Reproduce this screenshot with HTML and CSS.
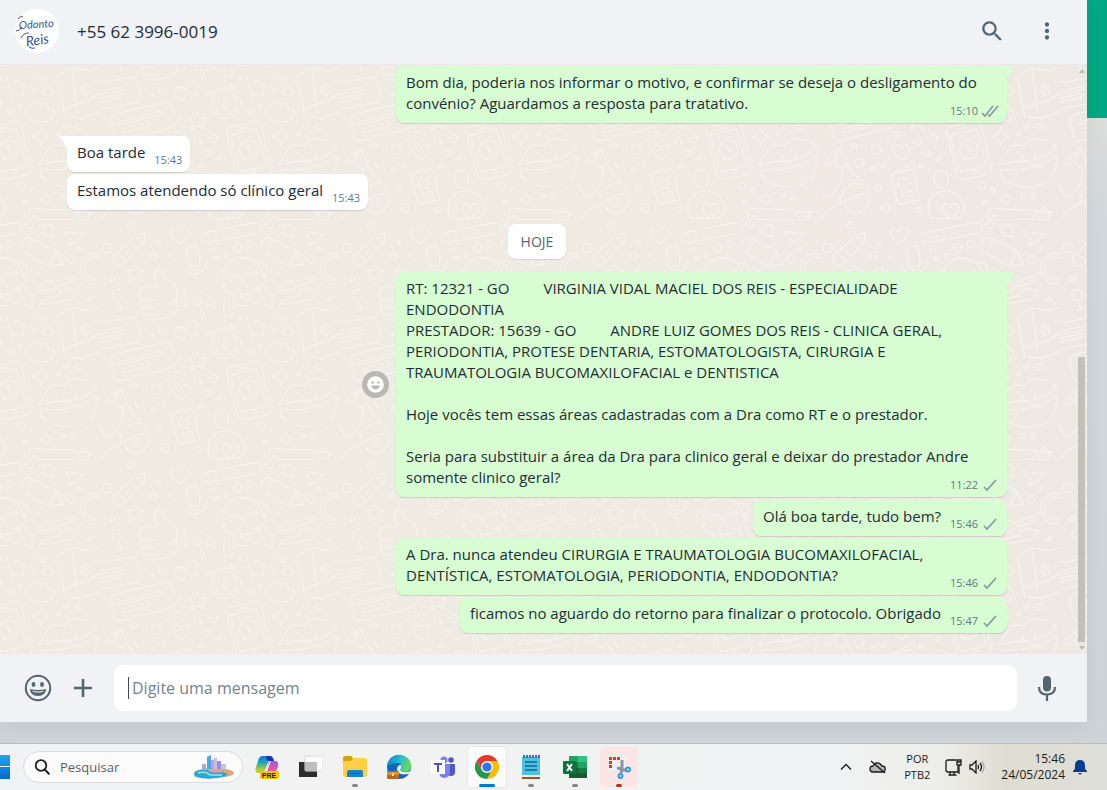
FILE: index.html
```html
<!DOCTYPE html>
<html lang="pt-BR">
<head>
    <meta charset="UTF-8">
    <meta name="viewport" content="width=device-width, initial-scale=1.0">
    <title>Conversa</title>
    <link rel="stylesheet" href="styles.css">
</head>
<body>

    <div class="desktop">
        <div class="app">

            <!-- Header -->
            <header class="chat-header">
                <svg class="avatar" viewBox="0 0 44 44" role="img" aria-label="Odonto Reis">
                    <circle cx="22" cy="22" r="22" fill="#fff"/>
                    <text x="4" y="19" transform="rotate(-4 22 18)">Odonto</text>
                    <text x="11" y="36" class="avatar-reis" transform="rotate(-8 22 34)">Reis</text>
                    <path d="M3 10q3-4 5-2M1 22q4 0 6-4M6 29q2-5 8-5M14 38q3 2 6 1"/>
                </svg>
                <h1>+55 62 3996-0019</h1>
                <button type="button" class="icon-btn search-btn" aria-label="Pesquisar na conversa">
                    <svg width="26" height="26" viewBox="0 0 24 24"><path fill="currentColor" d="M15.9 14.3H15l-.3-.3c1-1.1 1.6-2.7 1.6-4.3 0-3.7-3-6.7-6.7-6.7S3 6 3 9.7s3 6.7 6.7 6.7c1.6 0 3.2-.6 4.3-1.6l.3.3v.8l5.1 5.1 1.5-1.5-5-5.2zm-6.2 0c-2.6 0-4.6-2.1-4.6-4.6s2.1-4.6 4.6-4.6 4.6 2.1 4.6 4.6-2 4.6-4.6 4.6z"/></svg>
                </button>
                <button type="button" class="icon-btn" aria-label="Menu">
                    <svg width="26" height="26" viewBox="0 0 24 24"><path fill="currentColor" d="M12 8a2 2 0 1 0 0-4 2 2 0 0 0 0 4zm0 2a2 2 0 1 0 0 4 2 2 0 0 0 0-4zm0 6a2 2 0 1 0 0 4 2 2 0 0 0 0-4z"/></svg>
                </button>
            </header>

            <!-- Conversation -->
            <main class="chat">
                <svg class="wallpaper" aria-hidden="true">
                    <defs>
                        <path id="star" d="M0-26 8-8 27-8 13 5 19 25 0 14-18 26-13 6-28-7-8-9Z"/>
                        <path id="spark" d="M0-27Q4-5 25 0 5 4 0 26-4 5-24 0-4-4 0-27Z"/>
                        <path id="heart" d="M0 24C-34 2-28-20-12-20-3-20 0-12 0-10 2-18 8-24 17-21 34-14 24 10 0 24Z"/>
                        <pattern id="doodles" width="720" height="720" patternUnits="userSpaceOnUse" patternTransform="translate(100 155) scale(.3333)">
                            <g fill="none" stroke="#f5f2ec" stroke-width="4" stroke-linecap="round" stroke-linejoin="round">
                                <!-- pencils -->
                                <path d="M38 110 108 46 136 40 132 68 68 136Q52 142 44 130T38 110ZM108 46 130 68M50 98 80 124M484 76Q490 50 510 54L590 92 610 132 570 140 494 98Q480 90 484 76ZM516 58 502 98M590 92 570 140"/>
                                <!-- ruler, quotes -->
                                <path d="M318 38 464 8Q484 6 486 22T474 40L330 66Q308 68 306 52T318 38ZM326 52h2M346 48h2M370 44h2M394 40h2"/>
                                <path d="M226 345a17 17 0 1 1 30 2Q254 360 248 364L240 354Q226 356 226 345ZM262 328a17 17 0 1 1 30 2Q290 344 284 348L276 338Q264 338 262 328ZM548 38a17 17 0 1 1 30 0Q582 48 580 52L566 48Q550 50 548 38Z"/>
                                <!-- microphone -->
                                <path d="M260 96Q264 78 280 78T298 100L300 132Q296 150 282 150T264 132ZM242 136Q254 164 286 162 320 156 320 122M286 164 296 200"/>
                                <!-- thumb up -->
                                <path d="M124 214Q120 206 132 202L170 200Q162 180 166 152 174 136 186 146 194 174 226 196L230 206Q242 200 254 208 262 230 256 264 244 276 234 268 210 298 146 302 136 298 142 290 124 286 126 272 120 268 124 262 116 250 124 240 116 226 124 214ZM230 206Q226 240 234 268M124 240h40M124 262h42M130 284h38M200 252Q220 252 232 240"/>
                                <!-- monkey -->
                                <path d="M370 170Q374 118 424 114 478 114 490 168M370 150Q340 160 356 190 362 200 374 196M470 128Q510 126 500 160 498 170 488 174M370 180Q362 210 390 220 430 222 426 170 400 156 370 180ZM432 172Q430 210 470 208 504 190 490 164 460 146 432 172ZM384 170 396 184M402 162 406 182M440 160 452 176M462 150 470 174M420 220Q436 230 456 218 456 236 440 238T420 220ZM376 232Q366 266 376 286 394 294 402 268 408 240 396 224M478 206Q480 240 508 262 526 256 518 236 508 212 494 196M402 250Q440 268 484 238"/>
                                <!-- arrows -->
                                <path d="M284 248 320 222 346 264 334 268 322 248 310 292 300 288 308 244 290 258ZM610 34 672 42 630 78 630 56Z"/>
                                <!-- sliders -->
                                <path d="M534 200 552 194Q556 178 576 182 582 194 594 184L640 170Q652 176 642 184L600 198Q582 198 580 210 562 222 554 208L536 214Q526 208 534 200ZM546 240 594 228Q608 200 630 206 636 216 656 210 664 218 650 222 640 240 620 240L552 254Q536 250 546 240Z"/>
                                <!-- speech cards -->
                                <path d="M0 308 94 292Q108 290 110 304L122 350Q124 362 110 366L0 388M0 334 68 320Q78 324 66 330L0 344M0 354 64 342Q72 350 60 354L0 366M44 404 200 366Q214 364 216 380L222 402 242 414 228 430Q222 440 208 444L56 484Q50 486 46 476L30 428Q26 410 44 404ZM60 426 186 392Q198 396 184 404L62 434Q52 432 60 426ZM72 446 146 428Q160 434 144 440L76 458Q62 456 72 446Z"/>
                                <!-- stopwatch -->
                                <circle cx="376" cy="370" r="46"/><circle cx="376" cy="370" r="35"/>
                                <path d="M372 350V376L362 388Q378 392 382 376T372 350ZM388 318Q396 306 408 320L404 328ZM320 344Q316 332 330 334L338 338Z"/>
                                <!-- phone -->
                                <path d="M392 440 464 424Q480 422 484 438L514 566Q518 580 502 584L430 598Q416 600 412 586L380 460Q376 444 392 440ZM390 466 470 446 500 556 422 576ZM420 446 438 442"/>
                                <circle cx="446" cy="508" r="28"/><path d="M430 530 426 542 442 534M444 494Q440 516 458 514"/><circle cx="464" cy="574" r="6"/>
                                <!-- lips -->
                                <path d="M536 554Q566 500 586 496 606 494 614 500 630 470 660 478 690 480 710 500 690 530 640 540 580 544 536 554ZM542 580Q546 600 580 612 640 636 690 600 712 570 712 528 690 544 650 560 600 572 542 570ZM596 540Q620 556 650 530M610 572Q620 540 670 564M604 524 612 538M646 514 644 534"/>
                                <!-- map -->
                                <path d="M592 286 636 264 690 272 720 262M592 286 614 410 660 414 720 398M614 386 690 360 720 336M636 264 654 400"/><circle cx="676" cy="328" r="6"/><path d="M664 328a13 13 0 1 1 26-2Q688 340 678 350 664 340 664 328Z"/>
                                <!-- cloud -->
                                <path d="M500 410Q486 382 514 378 524 356 546 370 570 370 564 384 588 392 582 412 560 430 526 426 506 424 500 410Z"/>
                                <!-- scooter -->
                                <path d="M12 550 60 504 66 510 26 556ZM50 520Q40 546 56 560 76 570 80 552 80 530 64 518M68 566Q70 620 26 652 4 640 0 612M84 556 122 606M60 670Q66 610 116 610 152 614 148 644 120 640 98 650 66 668 60 670 20 690 0 720M74 668Q80 700 112 700 150 690 146 646"/><circle cx="108" cy="664" r="14"/>
                                <!-- passport -->
                                <path d="M212 584 262 560 270 570M212 584 268 570Q282 568 284 580L298 660 234 674ZM246 640 276 632 280 644 248 652Z"/><circle cx="250" cy="610" r="16"/>
                                <!-- bear -->
                                <path d="M342 600Q340 572 360 572 384 572 386 600 382 624 364 624 346 620 342 600ZM326 700Q318 640 376 632 432 638 434 690 426 720 396 716H350Q330 716 326 700ZM506 700Q504 684 520 686L640 690 690 700 680 720H506ZM512 718 524 704 532 718"/>
                                <circle cx="708" cy="146" r="46"/><circle cx="708" cy="146" r="34"/><circle cx="52" cy="226" r="16"/><path d="M56 242 62 266M52 270 74 266"/>
                                <use href="#star" x="106" y="160"/><use href="#star" x="472" y="324"/><use href="#star" x="292" y="422"/><use href="#star" x="672" y="704"/>
                                <use href="#spark" x="542" y="470"/>
                                <use href="#heart" x="238" y="46"/><use href="#heart" x="244" y="516"/><use href="#heart" x="392" y="692"/>
                                <g>
                                    <circle cx="22" cy="84" r="15"/><circle cx="160" cy="108" r="12"/><circle cx="209" cy="107" r="5"/><circle cx="176" cy="69" r="5"/><circle cx="92" cy="15" r="9"/><circle cx="508" cy="14" r="12"/><circle cx="452" cy="72" r="10"/><circle cx="414" cy="82" r="12"/><circle cx="338" cy="90" r="7"/><circle cx="350" cy="116" r="6"/><circle cx="378" cy="106" r="6"/><circle cx="634" cy="118" r="11"/><circle cx="660" cy="88" r="6"/><circle cx="534" cy="158" r="5"/><circle cx="38" cy="176" r="8"/><circle cx="184" cy="330" r="9"/><circle cx="154" cy="343" r="5"/><circle cx="432" cy="294" r="11"/><circle cx="526" cy="286" r="6"/><circle cx="550" cy="298" r="8"/><circle cx="564" cy="332" r="14"/><circle cx="522" cy="334" r="6"/><circle cx="452" cy="394" r="9"/><circle cx="480" cy="378" r="5"/><circle cx="230" cy="462" r="8"/><circle cx="294" cy="485" r="9"/><circle cx="340" cy="476" r="11"/><circle cx="170" cy="508" r="15"/><circle cx="206" cy="483" r="5"/><circle cx="104" cy="497" r="7"/><circle cx="118" cy="548" r="12"/><circle cx="158" cy="567" r="6"/><circle cx="190" cy="557" r="5"/><circle cx="322" cy="520" r="9"/><circle cx="356" cy="536" r="6"/><circle cx="304" cy="558" r="6"/><circle cx="176" cy="623" r="9"/><circle cx="196" cy="684" r="12"/><circle cx="618" cy="442" r="7"/><circle cx="658" cy="442" r="10"/><circle cx="596" cy="460" r="6"/><circle cx="486" cy="618" r="11"/><circle cx="518" cy="630" r="7"/><circle cx="558" cy="658" r="13"/><circle cx="494" cy="668" r="7"/><circle cx="610" cy="647" r="6"/><circle cx="637" cy="650" r="8"/><circle cx="688" cy="238" r="6"/><circle cx="298" cy="690" r="8"/>
                                </g>
                            </g>
                        </pattern>
                    </defs>
                    <rect width="100%" height="100%" fill="url(#doodles)"/>
                </svg>

                <article class="msg out wide tail">
                    <p>Bom dia, poderia nos informar o motivo, e confirmar se deseja o desligamento do<br>convénio? Aguardamos a resposta para tratativo.</p>
                    <div class="meta">
                        <time>15:10</time>
                        <svg width="18" height="13" viewBox="0 0 18 13"><path d="M1 8l3 3L12 1M7 10l1.500 1L17 1"/></svg>
                    </div>
                </article>
                <article class="msg in tail first-in">
                    <p>Boa tarde</p>
                    <div class="meta"><time>15:43</time></div>
                </article>
                <article class="msg in">
                    <p>Estamos atendendo só clínico geral</p>
                    <div class="meta"><time>15:43</time></div>
                </article>

                <div class="day">HOJE</div>

                <div class="row">
                    <button type="button" class="react" aria-label="Reagir">
                        <svg width="17" height="17" viewBox="0 0 17 17"><circle cx="8.500" cy="8.500" r="8.300" fill="#fff"/><circle cx="5.600" cy="6.500" r="1.200"/><circle cx="11.400" cy="6.500" r="1.200"/><path d="M4 9.500h9q-1 3.700-4.500 3.700T4 9.500z"/></svg>
                    </button>
                    <article class="msg out tail">
                        <p>RT: 12321 - GO<span class="tab"></span>VIRGINIA VIDAL MACIEL DOS REIS - ESPECIALIDADE<br>ENDODONTIA<br>PRESTADOR: 15639 - GO<span class="tab"></span>ANDRE LUIZ GOMES DOS REIS - CLINICA GERAL,<br>PERIODONTIA, PROTESE DENTARIA, ESTOMATOLOGISTA, CIRURGIA E<br>TRAUMATOLOGIA BUCOMAXILOFACIAL e DENTISTICA<br><br>Hoje vocês tem essas áreas cadastradas com a Dra como RT e o prestador.<br><br>Seria para substituir a área da Dra para clinico geral e deixar do prestador Andre<br>somente clinico geral?</p>
                        <div class="meta">
                            <time>11:22</time>
                            <svg width="18" height="13" viewBox="0 0 18 13"><path d="M3 8l3 3L15 1"/></svg>
                        </div>
                    </article>
                </div>
                <article class="msg out short">
                    <p>Olá boa tarde, tudo bem?</p>
                    <div class="meta">
                        <time>15:46</time>
                        <svg width="18" height="13" viewBox="0 0 18 13"><path d="M3 8l3 3L15 1"/></svg>
                    </div>
                </article>
                <article class="msg out wide">
                    <p>A Dra. nunca atendeu CIRURGIA E TRAUMATOLOGIA BUCOMAXILOFACIAL,<br>DENTÍSTICA, ESTOMATOLOGIA, PERIODONTIA, ENDODONTIA?</p>
                    <div class="meta">
                        <time>15:46</time>
                        <svg width="18" height="13" viewBox="0 0 18 13"><path d="M3 8l3 3L15 1"/></svg>
                    </div>
                </article>
                <article class="msg out short">
                    <p>ficamos no aguardo do retorno para finalizar o protocolo. Obrigado</p>
                    <div class="meta">
                        <time>15:47</time>
                        <svg width="18" height="13" viewBox="0 0 18 13"><path d="M3 8l3 3L15 1"/></svg>
                    </div>
                </article>

                <div class="scrollbar" aria-hidden="true">
                    <i class="up"></i>
                    <i class="thumb"></i>
                    <i class="down"></i>
                </div>
            </main>

            <!-- Message box -->
            <footer class="composer">
                <button type="button" class="icon-btn" aria-label="Emoji">
                    <svg width="28" height="28" viewBox="0 0 28 28"><circle cx="14" cy="14" r="12.200" fill="none" stroke="currentColor" stroke-width="2"/><ellipse cx="9.500" cy="10.500" rx="1.900" ry="2.400" fill="currentColor"/><ellipse cx="18" cy="10.500" rx="1.900" ry="2.400" fill="currentColor"/><path d="M6 15q8 2 16 0c0 4-3 7-8 7s-8-3-8-7z" fill="currentColor"/><path d="M8 16.800q6 1.600 12 0-1 1.800-6 1.800t-6-1.800z" fill="#f0f2f5"/></svg>
                </button>
                <button type="button" class="icon-btn plus-btn" aria-label="Anexar">
                    <svg width="20" height="20" viewBox="0 0 20 20"><path d="M10 1v18M1 10h18" stroke="currentColor" stroke-width="2.600"/></svg>
                </button>
                <div class="field">
                    <span class="caret"></span>
                    <input type="text" placeholder="Digite uma mensagem" aria-label="Digite uma mensagem">
                </div>
                <button type="button" class="icon-btn mic-btn" aria-label="Gravar áudio">
                    <svg width="20" height="26" viewBox="0 0 20 26"><rect x="6" y="1" width="8" height="15.500" rx="4" fill="currentColor"/><path d="M2 12q0 7.500 8 7.500t8-7.500M10 19v7" fill="none" stroke="currentColor" stroke-width="2.200"/></svg>
                </button>
            </footer>
        </div>
    </div>

    <!-- Taskbar -->
    <nav class="taskbar">
        <button type="button" class="start" aria-label="Iniciar">
            <svg width="10" height="24" viewBox="0 0 10 24"><defs><linearGradient id="win" x2="0" y2="1"><stop stop-color="#24a5ee"/><stop offset="1" stop-color="#0069d0"/></linearGradient></defs><path d="M0 0h10v11H0zM0 12h10v12H0z" fill="url(#win)"/></svg>
        </button>
        <div class="task-search">
            <svg width="16" height="16" viewBox="0 0 16 16"><circle cx="7" cy="6.500" r="5.300" fill="none" stroke="#222" stroke-width="1.800"/><path d="M10.800 10.500l4 4.200" stroke="#222" stroke-width="2" stroke-linecap="round"/></svg>
            <input type="search" placeholder="Pesquisar" aria-label="Pesquisar">
            <svg width="40" height="24" viewBox="0 0 40 24">
                <ellipse cx="20" cy="18" rx="20" ry="5" fill="#e0a878"/>
                <path d="M0 19q2-5 14-4 4 4 14 2 8 1 4 4-16 5-30 1-2-1-2-3z" fill="#2ba9d6"/><path d="M4 18q8-2 12 2h12" stroke="#91e4f3" stroke-width="1.500" fill="none"/>
                <path d="M13 2l4-2v14h-4z" fill="#4aa9ea"/><path d="M17 5h3v9h-3zM8 9h4v5H8z" fill="#b5a5dc"/><path d="M20 3h3v11h-3zM27 9h5v5h-5z" fill="#c9bce8"/><path d="M23 6h4v8h-4z" fill="#9a94ce"/>
            </svg>
        </div>
        <ul class="apps">
            <li><button type="button" aria-label="Copilot">
                <svg width="24" height="24" viewBox="0 0 24 24"><defs><linearGradient id="cop" x2="0" y2="1"><stop stop-color="#1376db"/><stop offset=".4" stop-color="#20a7b5"/><stop offset=".8" stop-color="#b9cb2b"/></linearGradient><linearGradient id="cop2" x2="0" y2="1"><stop stop-color="#9a58e5"/><stop offset=".6" stop-color="#f0579b"/><stop offset="1" stop-color="#ff9a52"/></linearGradient></defs><path d="M8 1h8l-3 6-4 11H3q-4-1-2-6l2-6q1-5 5-5z" fill="url(#cop)"/><path d="M11 1h4q3 0 4 5h-6q-2-2-2-5z" fill="#1336b7"/><path d="M15 6h5q4 0 3 5l-2 6q-1 4-5 4H8q3-1 4-6l1-6q0-2 2-3z" fill="url(#cop2)"/><path d="M14 8q1-2 2-2l-4 10H9q2 0 3-3z" fill="#fff"/><rect x="5" y="16" width="19" height="8" rx="2" fill="#ffc400"/><text x="14" y="23" text-anchor="middle" class="pre">PRE</text></svg>
            </button></li>
            <li><button type="button" aria-label="Visão de tarefas">
                <svg width="24" height="24" viewBox="0 0 24 24"><rect y="7" width="18" height="15" fill="#2b2b2a"/><rect x="6" y="1" width="18" height="15" rx="1" fill="#fafafa" stroke="#dcdcdc"/><path d="M6 7h12v9H6z" fill="#bdbdbd"/></svg>
            </button></li>
            <li class="open"><button type="button" aria-label="Explorador de Arquivos">
                <svg width="24" height="24" viewBox="0 0 24 24"><path d="M0 3q0-2 2-2h6l2 2v5H0z" fill="#d99e12"/><path d="M10 3h12q2 0 2 2v15q0 2-2 2H2q-2 0-2-2V6h8z" fill="#ffd047"/><path d="M4 22v-5q0-2 2-2h12q2 0 2 2v5z" fill="#1483cf"/><path d="M7 18h10v1H7z" fill="#0a61a5"/></svg>
            </button></li>
            <li><button type="button" aria-label="Edge">
                <svg width="24" height="24" viewBox="0 0 24 24"><defs><linearGradient id="edge" x2="1" y2=".3"><stop stop-color="#087fcc"/><stop offset=".6" stop-color="#27bfd0"/><stop offset="1" stop-color="#65dc58"/></linearGradient></defs><circle cx="12" cy="12" r="12" fill="#0f68b9"/><path d="M0 11Q2 0 12 0q12 1 12 11 0 6-7 6-4 0-3-3 2-6-4-6-7 0-10 3z" fill="url(#edge)"/><path d="M10 13q0 8 11 6 2 0 2-3-3 2-7 1-4-1-2-4 1-3-1-3t-3 3z" fill="#f2f5f7"/><rect y="16" width="12" height="8" rx="1" fill="#bd671c"/><path d="M0 17h12v3H0z" fill="#dd922e"/><path d="M5 18h2v3H5z" fill="#ffe171"/></svg>
            </button></li>
            <li><button type="button" aria-label="Teams">
                <svg width="24" height="24" viewBox="0 0 24 24"><circle cx="13" cy="5" r="3.500" fill="#7b83eb"/><circle cx="20" cy="5" r="2.800" fill="#5059c9"/><path d="M16 9h8v8q0 4-4 4t-4-3z" fill="#5059c9"/><path d="M8 9h11v7q0 7-6 7-5 0-5-7z" fill="#7b83eb"/><path d="M0 5h14v14H0z" fill="#fff"/><path d="M3 8h8v2H8v7H6v-7H3z" fill="#4b53bc"/></svg>
            </button></li>
            <li class="active"><button type="button" aria-label="Chrome">
                <svg width="24" height="24" viewBox="0 0 24 24"><path d="M12 6h10.400A12 12 0 0 1 12 24l5.200-9z" fill="#fbbc04"/><path d="M1.600 6L6.800 15l10.400 0L12 24A12 12 0 0 1 1.600 6z" fill="#279847"/><path d="M12 6h10.400A12 12 0 0 0 1.600 6l5.200 9z" fill="#e33b2e"/><circle cx="12" cy="12" r="6" fill="#fff"/><circle cx="12" cy="12" r="4.600" fill="#2f76ed"/></svg>
            </button></li>
            <li class="open"><button type="button" aria-label="Bloco de Notas">
                <svg width="24" height="24" viewBox="0 0 24 24"><path d="M3 20h18v4H3z" fill="#a65316"/><path d="M3 20h18v2H3z" fill="#eee"/><path d="M3 2h18v18H3z" fill="#4fc1e4"/><path d="M5 0v3M8 0v3M11 0v3M14 0v3M17 0v3M20 0v3M6 7h12M6 11h12M6 15h12" stroke="#096a92" stroke-width="1.700"/></svg>
            </button></li>
            <li class="open"><button type="button" aria-label="Excel">
                <svg width="24" height="24" viewBox="0 0 24 24"><path d="M6 1h9v6H6z" fill="#21a366"/><path d="M15 1h9v6h-9z" fill="#33c481"/><path d="M6 7h9v6H6z" fill="#107c41"/><path d="M15 7h9v6h-9z" fill="#21a366"/><path d="M6 13h18v10H6z" fill="#185c37"/><path d="M15 13h9v5h-9z" fill="#107c41"/><rect y="6" width="13" height="13" rx="1" fill="#0d7440"/><path d="M4 9l5 7M9 9l-5 7" stroke="#fff" stroke-width="2"/></svg>
            </button></li>
            <li class="alert"><button type="button" aria-label="Ferramenta de Captura">
                <svg width="24" height="24" viewBox="0 0 24 24"><rect x="1" y="1" width="18" height="15" rx="2" fill="#edf1f4"/><path d="M3.500 13V3.500H13" fill="none" stroke="#d2400f" stroke-width="3" stroke-dasharray="3 1"/><path d="M15 5v9l-1 4M14 15h6M15 14l-5-1" fill="none" stroke="#8b969c" stroke-width="3"/><circle cx="21" cy="14.500" r="2" fill="none" stroke="#28a0dd" stroke-width="2"/><circle cx="13.500" cy="21" r="2" fill="none" stroke="#28a0dd" stroke-width="2"/></svg>
            </button></li>
        </ul>
        <div class="tray">
            <button type="button" aria-label="Mostrar ícones ocultos"><svg width="12" height="8" viewBox="0 0 12 8"><path d="M1 6.500l5-5 5 5"/></svg></button>
            <button type="button" class="cloud" aria-label="OneDrive"><svg width="18" height="14" viewBox="0 0 18 14"><path d="M4 12h10q3-1 2-4 0-2-3-2-2-4-6-3-2 1-3 3-3 0-3 3t3 3z"/><path d="M2 1l14 12"/></svg></button>
            <button type="button" class="lang">POR<br>PTB2</button>
            <button type="button" class="net" aria-label="Rede e som">
                <svg width="17" height="17" viewBox="0 0 17 17"><path d="M11 1H3Q1 1 1 3v8q0 2 2 2h10V7M5 13v3M9 13v3M3.500 16h8"/><path d="M12 1h4v5h-4zM14 6v9M12 3h4"/></svg>
                <svg width="17" height="14" viewBox="0 0 17 14"><path d="M1 5h2l4-4v12L3 9H1zM9 5q1 2 0 4M11 3q3 4 0 8"/><path class="faint" d="M13 1.500q4 5.500 0 11"/></svg>
            </button>
            <button type="button" class="clock">15:46<br>24/05/2024</button>
            <button type="button" aria-label="Notificações"><svg class="bell" width="14" height="16" viewBox="0 0 14 16"><path d="M7 1q5 0 5 6v3l2 2v1H0v-1l2-2V7q0-6 5-6zM5 14h4q-2 3-4 0z"/></svg></button>
        </div>
    </nav>

</body>
</html>
```
FILE: styles.css
```css
* {
    box-sizing: border-box;
}

body {
    margin: 0;
    height: 100vh;
    display: flex;
    flex-direction: column;
    overflow: hidden;
    font-family: "Segoe UI", "Open Sans", "Noto Sans", sans-serif;
    color: #222d33;
}

button {
    border: 0;
    padding: 0;
    background: none;
    font: inherit;
    color: inherit;
    display: flex;
    align-items: center;
    justify-content: center;
    cursor: pointer;
}

svg {
    display: block;
    flex: none;
}

/* Window */
.desktop {
    flex: 1;
    min-height: 0;
    display: flex;
    padding: 0 20px 21px 0;
    background: linear-gradient(#00a884 118px, #dcdddb 118px, #d1d7db 220px, #cdd3d6);
}

.app {
    flex: 1;
    min-width: 0;
    display: flex;
    flex-direction: column;
    box-shadow: 0 6px 18px rgba(11, 20, 26, 0.05);
}

/* Header */
.chat-header {
    height: 65px;
    display: flex;
    align-items: center;
    padding: 0 27px 2px 15px;
    background: #f0f2f5;
    border-bottom: 1px solid #e9e9ea;
}

.chat-header h1 {
    flex: 1;
    margin: 0 0 0 18px;
    font-size: 17px;
    font-weight: 400;
}

.avatar {
    width: 44px;
    height: 44px;
}

.avatar text {
    font: italic 11px Lato, sans-serif;
    fill: #39578d;
}

.avatar .avatar-reis {
    font-size: 14px;
}

.avatar path {
    fill: none;
    stroke: #39578d;
    stroke-width: 1;
}

.icon-btn {
    color: #54656f;
}

.search-btn {
    margin-right: 29px;
}

/* Conversation */
.chat {
    position: relative;
    flex: 1;
    min-height: 0;
    display: flex;
    flex-direction: column;
    justify-content: flex-end;
    gap: 2px;
    padding: 0 80px 21px 67px;
    overflow: hidden;
    background: linear-gradient(90deg, #efeae2 60%, #eee8e2);
}

.wallpaper {
    position: absolute;
    left: 0;
    top: 0;
    width: 100%;
    height: 100%;
}

.msg {
    position: relative;
    display: grid;
    flex: none;
    padding: 6px 10px 9px;
    border-radius: 8px;
    background: #fff;
    box-shadow: 0 1px 1px rgba(11, 20, 26, 0.15);
}

.msg p {
    grid-area: 1 / 1;
    margin: 0;
    font-size: 15px;
    line-height: 21px;
    white-space: nowrap;
}

.in {
    align-self: flex-start;
}

.in p {
    padding-right: 35px;
}

.out {
    align-self: flex-end;
    background: #d9fdd3;
}

.wide,
.row .msg {
    width: 65%;
}

.short p {
    padding-right: 56px;
}

.tail::before {
    content: "";
    position: absolute;
    top: 0;
    width: 16px;
    height: 12px;
    background: inherit;
}

.out.tail::before {
    right: -8px;
    clip-path: polygon(0 0, 100% 0, 50% 100%, 0 100%);
}

.in.tail::before {
    left: -8px;
    clip-path: polygon(0 0, 100% 0, 100% 100%, 50% 100%);
}

.first-in {
    margin-top: 11px;
}

.meta {
    grid-area: 1 / 1;
    place-self: end;
    display: flex;
    align-items: center;
    gap: 3px;
    margin-bottom: -6px;
    margin-right: -2px;
    font-size: 11px;
    line-height: 18px;
    color: #667781;
}

.meta path {
    fill: none;
    stroke: #8696a0;
    stroke-width: 1.6;
}

.day {
    position: relative;
    align-self: center;
    margin: 12px 0 11px;
    padding: 0 13px;
    border-radius: 8px;
    background: #fff;
    box-shadow: 0 1px 1px rgba(11, 20, 26, 0.13);
    font-size: 14px;
    line-height: 35px;
    color: #54656f;
}

.row {
    display: flex;
    align-items: center;
    justify-content: flex-end;
    margin-bottom: 1px;
}

.react {
    position: relative;
    width: 27px;
    height: 27px;
    margin-right: 7px;
    border-radius: 50%;
    background: #bbb8b3;
    fill: #bbb8b3;
}

.tab {
    display: inline-block;
    width: 34px;
}

.scrollbar {
    position: absolute;
    top: 4px;
    right: 2px;
    bottom: 4px;
    width: 7px;
    display: flex;
    flex-direction: column;
    align-items: center;
}

.scrollbar .up {
    border: 3px solid transparent;
    border-top: 0;
    border-bottom: 4px solid #bcb9b5;
}

.scrollbar .down {
    margin-top: 4px;
    border: 3px solid transparent;
    border-bottom: 0;
    border-top: 4px solid #bcb9b5;
}

.scrollbar .thumb {
    width: 100%;
    height: 49%;
    margin-top: auto;
    background: #c2c0ba;
}

/* Message box */
.composer {
    height: 68px;
    display: flex;
    align-items: center;
    padding: 0 30px 0 24px;
    background: #f0f2f5;
}

.plus-btn {
    margin: 0 21px;
}

.mic-btn {
    margin-left: 20px;
}

.field {
    flex: 1;
    height: 46px;
    display: flex;
    align-items: center;
    gap: 3px;
    padding: 0 14px;
    border-radius: 9px;
    background: #fff;
}

.caret {
    width: 1px;
    height: 22px;
    background: #3b4a54;
}

input {
    flex: 1;
    min-width: 0;
    border: 0;
    padding: 0;
    outline: 0;
    background: none;
    font: inherit;
    appearance: none;
}

.field input {
    font-size: 16px;
}

.field input::placeholder {
    color: #74838c;
    opacity: 1;
}

/* Taskbar */
.taskbar {
    height: 47px;
    display: flex;
    align-items: center;
    border-top: 1px solid #b9bec2;
    background: linear-gradient(90deg, #f0f2f5, #f2f2f2 30%, #f1f2f3 75%, #ededea 85%, #dfddd0 91%, #dedfda);
}

.task-search {
    width: 220px;
    height: 32px;
    display: flex;
    align-items: center;
    gap: 10px;
    margin: 0 2px 0 13px;
    padding: 0 8px 0 10px;
    border: 1px solid #dcdcdc;
    border-radius: 16px;
    background: #fbfbfb;
}

.task-search input {
    font-size: 13px;
}

.task-search input::placeholder {
    color: #5c5c5c;
    opacity: 1;
}

.apps {
    display: flex;
    margin: 0;
    padding: 0;
    list-style: none;
}

.apps li {
    width: 44px;
    display: flex;
    justify-content: center;
}

.apps button {
    position: relative;
    width: 38px;
    height: 40px;
    border-radius: 4px;
}

.active button {
    background: #fbfbfb;
    box-shadow: 0 0 1px 1px #e6e6e6;
}

.alert button {
    background: #fde5e5;
}

.open button::after,
.active button::after,
.alert button::after {
    content: "";
    position: absolute;
    bottom: 0;
    width: 6px;
    height: 3px;
    border-radius: 2px;
    background: #868686;
}

.active button::after {
    width: 16px;
    background: #0078d4;
}

.alert button::after {
    background: #c42b1c;
}

.pre {
    font: bold 7px "Liberation Sans", sans-serif;
    fill: #222;
}

.tray {
    margin-left: auto;
    padding-right: 20px;
    display: flex;
    align-items: center;
    font-size: 11px;
    line-height: 16px;
    color: #1b1b1b;
}

.tray path {
    fill: none;
    stroke: #1b1b1b;
    stroke-width: 1.3;
}

.tray .faint {
    stroke: #aaa;
}

.tray .cloud {
    margin: 0 17px;
}

.tray .cloud path:first-child {
    fill: #b5b5b5;
}

.net {
    gap: 7px;
    margin: 0 15px;
}

.clock {
    margin-right: 8px;
    font-size: 12px;
    text-align: right;
}

.tray .bell path {
    fill: #003e92;
    stroke: none;
}
```
